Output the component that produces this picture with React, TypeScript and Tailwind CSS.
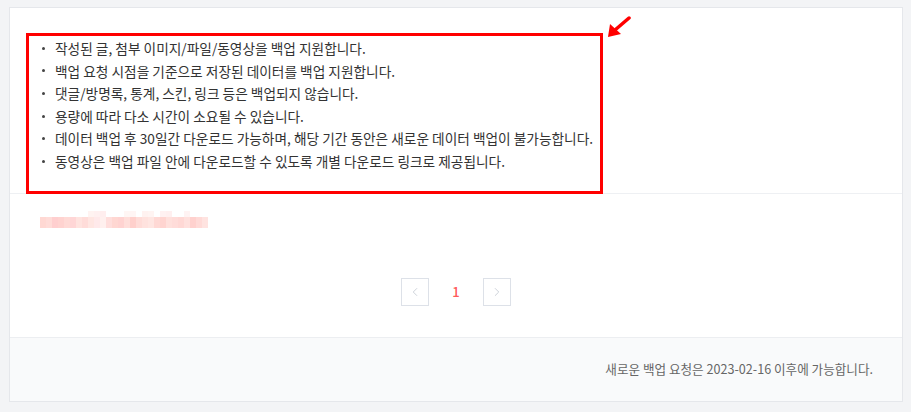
import React from "react";
import { ChevronLeft, ChevronRight } from "lucide-react";

const notices = [
  "작성된 글, 첨부 이미지/파일/동영상을 백업 지원합니다.",
  "백업 요청 시점을 기준으로 저장된 데이터를 백업 지원합니다.",
  "댓글/방명록, 통계, 스킨, 링크 등은 백업되지 않습니다.",
  "용량에 따라 다소 시간이 소요될 수 있습니다.",
  "데이터 백업 후 30일간 다운로드 가능하며, 해당 기간 동안은 새로운 데이터 백업이 불가능합니다.",
  "동영상은 백업 파일 안에 다운로드할 수 있도록 개별 다운로드 링크로 제공됩니다.",
];

// pixelated (mosaic) blog title
const mosaicTop = [
  "bg-white", "bg-white", "bg-white", "bg-white", "bg-white", "bg-white", "bg-white", "bg-white",
  "bg-[#fff3f1]", "bg-[#fff0f0]", "bg-[#ffeeee]", "bg-white", "bg-white", "bg-white", "bg-[#fff6f4]",
  "bg-[#fff5f4]", "bg-white", "bg-[#fff2f0]", "bg-[#fff4f2]", "bg-white", "bg-[#fff1f1]", "bg-[#ffefef]",
  "bg-white", "bg-white", "bg-[#fff3f3]", "bg-white", "bg-white", "bg-white",
];
const mosaicBottom = [
  "bg-[#ffd8d3]", "bg-[#ffdcd8]", "bg-[#ffcfcf]", "bg-[#ffd3d0]", "bg-[#ffdad6]", "bg-[#ffd6d6]",
  "bg-[#ffe3df]", "bg-[#ffdcd9]", "bg-[#ffe6e2]", "bg-[#ffe9ea]", "bg-[#fff0ee]", "bg-[#ffdedc]",
  "bg-[#ffd7d2]", "bg-[#ffd3d1]", "bg-[#ffdeda]", "bg-[#ffd0cc]", "bg-[#ffdcd8]", "bg-[#ffe2de]",
  "bg-[#ffe6e2]", "bg-[#ffd9d5]", "bg-[#ffd4d0]", "bg-[#ffe0dc]", "bg-[#ffdcd9]", "bg-[#ffd8d5]",
  "bg-[#ffe0dd]", "bg-[#ffd1ce]", "bg-[#ffdad7]", "bg-[#ffe3e0]",
];

export default function App() {
  return (
    <div
      className="h-[412px] w-[911px] bg-[#f3f4f6] pl-[9px] pt-[7px]"
      style={{ fontFamily: '"Noto Sans CJK KR", "Noto Sans", sans-serif' }}
    >
      <div className="relative flex h-[395px] w-[894px] flex-col border border-[#e5e7eb] bg-white">
        {/* annotation arrow */}
        <svg className="absolute left-[597px] top-[8px]" width="24" height="22" viewBox="0 0 24 22">
          <line x1="22" y1="2" x2="8" y2="14" stroke="#ff0000" strokeWidth="3.5" strokeLinecap="round" />
          <polygon points="1,21 3,8 14,18" fill="#ff0000" />
        </svg>

        <div className="h-[186px] border-b border-[#eef0f3] pl-[16px] pt-[25px]">
          <div className="h-[161px] w-[577px] border-[3px] border-[#ff0000] pl-[13px] pt-[1px]">
            <ul className="text-[13.7px] leading-[22.6px] text-[#333]">
              {notices.map((n) => (
                <li key={n} className="flex items-center">
                  <span className="mr-[10px] h-[3px] w-[3px] rounded-full bg-[#444]" />
                  <span>{n}</span>
                </li>
              ))}
            </ul>
          </div>
        </div>

        <div className="flex flex-1 flex-col">
          <div className="ml-[30px] mt-[17px] flex flex-col">
            <div className="flex">
              {mosaicTop.map((c, i) => (
                <span key={i} className={`h-[6px] w-[6px] ${c}`} />
              ))}
            </div>
            <div className="flex">
              {mosaicBottom.map((c, i) => (
                <span key={i} className={`h-[11px] w-[6px] ${c}`} />
              ))}
            </div>
          </div>

          <div className="mt-[50px] flex items-center justify-center gap-[13px]">
            <button className="flex h-[28px] w-[28px] items-center justify-center border border-[#dde1e8] bg-white">
              <ChevronLeft size={14} strokeWidth={1.5} color="#c6cbd4" />
            </button>
            <span className="w-[28px] text-center text-[13px] font-medium text-[#ff5a5a]">1</span>
            <button className="flex h-[28px] w-[28px] items-center justify-center border border-[#dde1e8] bg-white">
              <ChevronRight size={14} strokeWidth={1.5} color="#c6cbd4" />
            </button>
          </div>
        </div>

        <div className="flex h-[64px] items-center justify-end border-t border-[#eceef1] bg-[#f9fafb] pr-[29px]">
          <p className="text-[12.6px] text-[#666]">새로운 백업 요청은 2023-02-16 이후에 가능합니다.</p>
        </div>
      </div>
    </div>
  );
}
